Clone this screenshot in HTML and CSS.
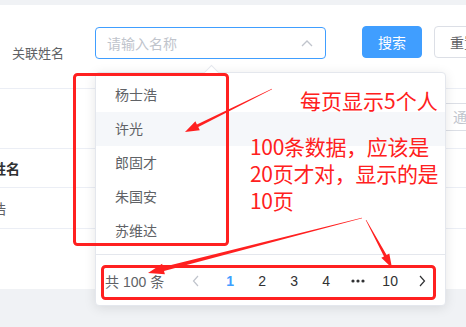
FILE: index.html
```html
<!DOCTYPE html>
<html lang="zh">
<head>
    <meta charset="UTF-8">
    <meta name="viewport" content="width=device-width, initial-scale=1.0">
    <title>关联姓名</title>
    <link rel="stylesheet" href="styles.css">
</head>
<body>

    <div class="page">
        <div class="card">
            <div class="search-bar">
                <label class="form-label">关联姓名</label>
                <div class="select-input">
                    <span class="placeholder">请输入名称</span>
                    <svg class="select-arrow" width="12" height="8" viewBox="0 0 12 8">
                        <polyline points="1,7 6,2 11,7" fill="none" stroke="#c0c4cc" stroke-width="1.3"/>
                    </svg>
                </div>
                <button class="btn btn-primary">搜索</button>
                <button class="btn btn-default">重置</button>
            </div>

            <div class="toolbar">
                <div class="tool-input">通</div>
            </div>

            <div class="table">
                <div class="table-row table-head">
                    <div class="cell">关联姓名</div>
                </div>
                <div class="table-row">
                    <div class="cell">杨士浩</div>
                </div>
            </div>
        </div>
    </div>

    <!-- 下拉选项 -->
    <div class="dropdown">
        <div class="dropdown-caret"></div>
        <ul class="dropdown-list">
            <li>杨士浩</li>
            <li class="hover">许光</li>
            <li>郎固才</li>
            <li>朱国安</li>
            <li>苏维达</li>
        </ul>
        <div class="pager">
            <span class="pager-total">共 100 条</span>
            <span class="pager-btn prev">
                <svg width="8" height="12" viewBox="0 0 8 12"><polyline points="6,1 1.5,6 6,11" fill="none" stroke="#c0c4cc" stroke-width="1.2"/></svg>
            </span>
            <span class="pager-item active">1</span>
            <span class="pager-item">2</span>
            <span class="pager-item">3</span>
            <span class="pager-item">4</span>
            <span class="pager-item">
                <svg width="14" height="4" viewBox="0 0 14 4"><circle cx="2" cy="2" r="1.6" fill="#303133"/><circle cx="7" cy="2" r="1.6" fill="#303133"/><circle cx="12" cy="2" r="1.6" fill="#303133"/></svg>
            </span>
            <span class="pager-item">10</span>
            <span class="pager-item">
                <svg width="8" height="12" viewBox="0 0 8 12"><polyline points="2,1 6.5,6 2,11" fill="none" stroke="#303133" stroke-width="1.2"/></svg>
            </span>
        </div>
    </div>

    <!-- 标注 -->
    <svg class="marks" width="466" height="327" viewBox="0 0 466 327">
        <rect x="74.5" y="74.5" width="153" height="170" rx="3" fill="none" stroke="#ff2020" stroke-width="3"/>
        <rect x="102.5" y="266.5" width="332" height="32" rx="3" fill="none" stroke="#ff2020" stroke-width="3"/>
        <polygon fill="#ff2020" points="271.9,88.7 196.9,124.5 195.4,121.3 185,132 199.8,130.3 198.3,127.1 272.1,89.3"/>
        <polygon fill="#ff2020" points="361.9,217.7 163.0,267.1 162.1,263.7 148,273 164.9,274.3 164.0,270.9 362.1,218.3"/>
        <polygon fill="#ff2020" points="365.7,220.1 384.0,256.4 381.3,257.8 392,268 389.3,253.6 386.6,255.0 366.3,219.9"/>
    </svg>
    <div class="note note-top">每页显示5个人</div>
    <div class="note note-mid">100条数据，应该是<br>20页才对，显示的是<br>10页</div>

</body>
</html>
```

FILE: styles.css
```css
body {
    margin: 0;
    font-family: "Liberation Sans", "Noto Sans CJK SC", sans-serif;
    background-color: #f0f2f5;
    width: 466px;
    height: 327px;
    overflow: hidden;
    position: relative;
}
.page {
    padding-top: 5px;
}
.card {
    background-color: white;
    height: 284px;
    overflow: hidden;
}
.search-bar {
    display: flex;
    align-items: flex-start;
    height: 84px;
    box-sizing: border-box;
    padding: 21px 0 0 12px;
    border-bottom: 1px solid #ebeef5;
}
.search-bar > * {
    flex-shrink: 0;
}
.form-label {
    width: 83px;
    padding-top: 17px;
    font-size: 13px;
    color: #606266;
}
.select-input {
    width: 231px;
    height: 32px;
    box-sizing: border-box;
    border: 1px solid #409eff;
    border-radius: 4px;
    display: flex;
    align-items: center;
    padding: 0 12px 0 11px;
    margin-top: 1px;
}
.placeholder {
    flex: 1;
    font-size: 14px;
    color: #c0c4cc;
}
.btn {
    width: 60px;
    height: 32px;
    padding: 0;
    border-radius: 4px;
    font-size: 14px;
    font-family: inherit;
    white-space: nowrap;
    cursor: pointer;
}
.btn-primary {
    margin-left: 36px;
    background-color: #409eff;
    border: 1px solid #409eff;
    color: white;
}
.btn-default {
    margin-left: 12px;
    background-color: white;
    border: 1px solid #dcdfe6;
    color: #606266;
}
.toolbar {
    height: 59px;
    display: flex;
    justify-content: flex-end;
    padding-top: 14px;
    box-sizing: border-box;
}
.tool-input {
    width: 60px;
    height: 28px;
    margin-right: -34px;
    box-sizing: border-box;
    border: 1px solid #dcdfe6;
    border-radius: 4px;
    padding-left: 12px;
    font-size: 14px;
    line-height: 26px;
    color: #c0c4cc;
}
.table {
    margin-left: -46px;
    border-top: 1px solid #ebeef5;
}
.table-row {
    height: 40px;
    display: flex;
    align-items: center;
    border-bottom: 1px solid #ebeef5;
    font-size: 14px;
    color: #606266;
}
.table-row.table-head {
    height: 38px;
    font-weight: bold;
    color: #303133;
}
.cell {
    padding-left: 10px;
}
.dropdown {
    position: absolute;
    left: 95px;
    top: 72px;
    width: 351px;
    height: 234px;
    box-sizing: border-box;
    background-color: white;
    border: 1px solid #e4e7ed;
    border-radius: 4px;
    box-shadow: 0 2px 12px rgba(0, 0, 0, 0.1);
}
.dropdown-caret {
    position: absolute;
    left: 110px;
    top: -6px;
    width: 10px;
    height: 10px;
    background-color: white;
    border-left: 1px solid #e4e7ed;
    border-top: 1px solid #e4e7ed;
    transform: rotate(45deg);
}
.dropdown-list {
    list-style: none;
    margin: 0;
    padding: 5px 0 6px;
    border-bottom: 1px solid #e4e7ed;
}
.dropdown-list li {
    height: 34px;
    line-height: 34px;
    padding-left: 19px;
    font-size: 14px;
    color: #606266;
}
.dropdown-list li.hover {
    background-color: #f5f7fa;
}
.pager {
    display: flex;
    align-items: center;
    height: 52px;
    padding-left: 9px;
    font-size: 14px;
    color: #303133;
}
.pager-total {
    color: #606266;
    margin-right: 16px;
}
.pager-btn,
.pager-item {
    width: 32px;
    height: 28px;
    display: flex;
    align-items: center;
    justify-content: center;
}
.pager-btn {
    margin-right: 2px;
}
.pager-item.active {
    color: #409eff;
    font-weight: bold;
}
.marks {
    position: absolute;
    left: 0;
    top: 0;
}
.note {
    position: absolute;
    font-family: "Noto Sans CJK SC", sans-serif;
    font-size: 21px;
    color: #ff2020;
    white-space: nowrap;
}
.note-top {
    left: 300px;
    top: 85px;
    line-height: 30px;
}
.note-mid {
    left: 250px;
    top: 133px;
    line-height: 27px;
    letter-spacing: -0.3px;
}
```
